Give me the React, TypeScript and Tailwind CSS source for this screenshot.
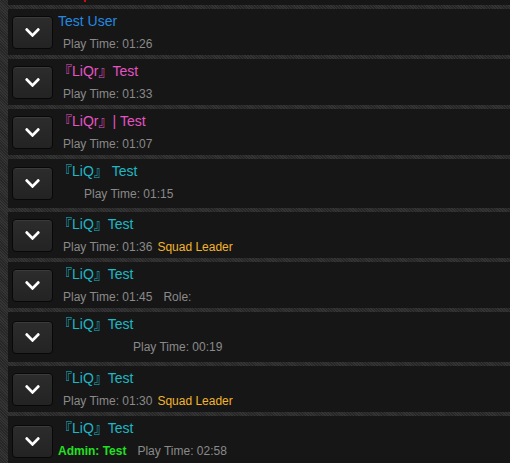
import React from 'react';

type Player = {
  name: string;
  nameColor: string;
  height: string;
  info: React.ReactNode;
};

const Chevron = () => (
  <svg viewBox="0 0 448 512" className="h-[17px] w-[15px] fill-white">
    <path d="M207.029 381.476L12.686 187.132c-9.373-9.373-9.373-24.569 0-33.941l22.667-22.667c9.357-9.357 24.522-9.375 33.901-.04L224 284.505l154.745-154.021c9.379-9.335 24.544-9.317 33.901.04l22.667 22.667c9.373 9.373 9.373 24.569 0 33.941L240.971 381.476c-9.373 9.372-24.569 9.372-33.942 0z" />
  </svg>
);

const PlayTime = ({ time, className = 'ml-[5px]' }: { time: string; className?: string }) => (
  <span className={`text-[#8a8a8a] ${className}`}>Play Time: {time}</span>
);

const Squad = () => <span className="ml-[5px] text-[#f2b42c]">Squad Leader</span>;

const players: Player[] = [
  { name: 'Test User', nameColor: 'text-[#2389e0]', height: 'h-[46px]', info: <PlayTime time="01:26" /> },
  { name: '『LiQr』Test', nameColor: 'text-[#e454c4]', height: 'h-[46px]', info: <PlayTime time="01:33" /> },
  { name: '『LiQr』| Test', nameColor: 'text-[#e454c4]', height: 'h-[46px]', info: <PlayTime time="01:07" /> },
  {
    name: '『LiQ』 Test',
    nameColor: 'text-[#1fb6c6]',
    height: 'h-[49px]',
    info: <PlayTime time="01:15" className="ml-[26px]" />,
  },
  {
    name: '『LiQ』Test',
    nameColor: 'text-[#1fb6c6]',
    height: 'h-[46px]',
    info: (
      <>
        <PlayTime time="01:36" />
        <Squad />
      </>
    ),
  },
  {
    name: '『LiQ』Test',
    nameColor: 'text-[#1fb6c6]',
    height: 'h-[46px]',
    info: (
      <>
        <PlayTime time="01:45" />
        <span className="ml-[11px] text-[#8a8a8a]">Role:</span>
      </>
    ),
  },
  {
    name: '『LiQ』Test',
    nameColor: 'text-[#1fb6c6]',
    height: 'h-[50px]',
    info: <PlayTime time="00:19" className="ml-[75px]" />,
  },
  {
    name: '『LiQ』Test',
    nameColor: 'text-[#1fb6c6]',
    height: 'h-[46px]',
    info: (
      <>
        <PlayTime time="01:30" />
        <Squad />
      </>
    ),
  },
  {
    name: '『LiQ』Test',
    nameColor: 'text-[#1fb6c6]',
    height: 'h-[50px]',
    info: (
      <>
        <span className="font-bold text-[#22e022]">Admin: Test</span>
        <PlayTime time="02:58" className="ml-[11px]" />
      </>
    ),
  },
];

const PlayerRow = ({ p }: { p: Player }) => (
  <div className={`flex ${p.height} bg-[#161616]`}>
    <div className="flex items-center pl-[4px]">
      <button className="flex h-[33px] w-[41px] items-center justify-center rounded-[4px] border border-[#080808] bg-gradient-to-b from-[#2c2c2c] to-[#232323] shadow-[inset_0_1px_0_#3a3a3a]">
        <Chevron />
      </button>
    </div>
    <div className="flex flex-col pl-[5px] pt-[4px]">
      <div className={`text-[14px] leading-[16px] whitespace-pre ${p.nameColor}`}>{p.name}</div>
      <div className="mt-[8px] flex whitespace-pre text-[12px] leading-[14px]">{p.info}</div>
    </div>
  </div>
);

export default function App() {
  return (
    <div className="h-[463px] w-[510px] overflow-hidden bg-[#2d2d2d] bg-[repeating-linear-gradient(45deg,#272727_0px,#272727_1px,#343434_1px,#343434_2px)] pl-[8px] font-['Liberation_Sans','Noto_Sans_CJK_SC',sans-serif]">
      <div className="flex flex-col gap-[4px]">
        <div className="h-[5px] bg-[#161616]">
          <div className="ml-[76px] h-[2px] w-[2px] bg-[#d01010]" />
        </div>
        {players.map((p, i) => (
          <PlayerRow key={i} p={p} />
        ))}
      </div>
    </div>
  );
}
